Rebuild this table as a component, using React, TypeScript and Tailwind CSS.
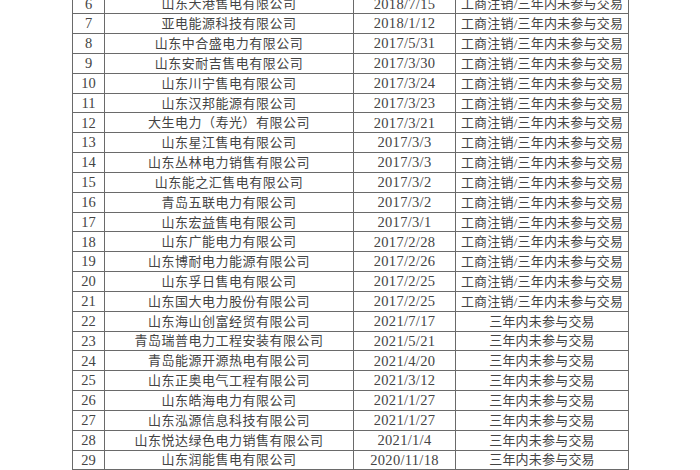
type Row = { no: number; name: string; date: string; reason: string };

const CANCELLED = '工商注销/三年内未参与交易';
const IDLE = '三年内未参与交易';

const rows: Row[] = [
  { no: 6, name: '山东天港售电有限公司', date: '2018/7/15', reason: CANCELLED },
  { no: 7, name: '亚电能源科技有限公司', date: '2018/1/12', reason: CANCELLED },
  { no: 8, name: '山东中合盛电力有限公司', date: '2017/5/31', reason: CANCELLED },
  { no: 9, name: '山东安耐吉售电有限公司', date: '2017/3/30', reason: CANCELLED },
  { no: 10, name: '山东川宁售电有限公司', date: '2017/3/24', reason: CANCELLED },
  { no: 11, name: '山东汉邦能源有限公司', date: '2017/3/23', reason: CANCELLED },
  { no: 12, name: '大生电力（寿光）有限公司', date: '2017/3/21', reason: CANCELLED },
  { no: 13, name: '山东星江售电有限公司', date: '2017/3/3', reason: CANCELLED },
  { no: 14, name: '山东丛林电力销售有限公司', date: '2017/3/3', reason: CANCELLED },
  { no: 15, name: '山东能之汇售电有限公司', date: '2017/3/2', reason: CANCELLED },
  { no: 16, name: '青岛五联电力有限公司', date: '2017/3/2', reason: CANCELLED },
  { no: 17, name: '山东宏益售电有限公司', date: '2017/3/1', reason: CANCELLED },
  { no: 18, name: '山东广能电力有限公司', date: '2017/2/28', reason: CANCELLED },
  { no: 19, name: '山东博耐电力能源有限公司', date: '2017/2/26', reason: CANCELLED },
  { no: 20, name: '山东孚日售电有限公司', date: '2017/2/25', reason: CANCELLED },
  { no: 21, name: '山东国大电力股份有限公司', date: '2017/2/25', reason: CANCELLED },
  { no: 22, name: '山东海山创富经贸有限公司', date: '2021/7/17', reason: IDLE },
  { no: 23, name: '青岛瑞普电力工程安装有限公司', date: '2021/5/21', reason: IDLE },
  { no: 24, name: '青岛能源开源热电有限公司', date: '2021/4/20', reason: IDLE },
  { no: 25, name: '山东正奥电气工程有限公司', date: '2021/3/12', reason: IDLE },
  { no: 26, name: '山东皓海电力有限公司', date: '2021/1/27', reason: IDLE },
  { no: 27, name: '山东泓源信息科技有限公司', date: '2021/1/27', reason: IDLE },
  { no: 28, name: '山东悦达绿色电力销售有限公司', date: '2021/1/4', reason: IDLE },
  { no: 29, name: '山东润能售电有限公司', date: '2020/11/18', reason: IDLE },
];

// cell borders drawn on each cell, the table collapses them
const cell = 'border border-[#6a6a6a] p-0 text-center align-middle leading-none';

export default function App() {
  return (
    <div className="h-[470px] w-[700px] overflow-hidden bg-white">
      <table
        className="ml-[72px] mt-[-6.5px] table-fixed border-collapse text-[13px] text-[#444]"
        style={{ fontFamily: '"Liberation Serif", "Noto Sans CJK SC", serif' }}
      >
        <colgroup>
          <col className="w-[32px]" />
          <col className="w-[249px]" />
          <col className="w-[102px]" />
          <col className="w-[173px]" />
        </colgroup>
        <tbody>
          {rows.map((r) => (
            <tr key={r.no} className="h-[19.83px]">
              <td className={`${cell} text-[14.5px]`}>{r.no}</td>
              <td className={`${cell} tracking-[0.5px]`}>{r.name}</td>
              <td className={`${cell} text-[14.5px] tracking-[0.3px]`}>{r.date}</td>
              <td className={`${cell} tracking-[0.2px]`}>{r.reason}</td>
            </tr>
          ))}
        </tbody>
      </table>
    </div>
  );
}
